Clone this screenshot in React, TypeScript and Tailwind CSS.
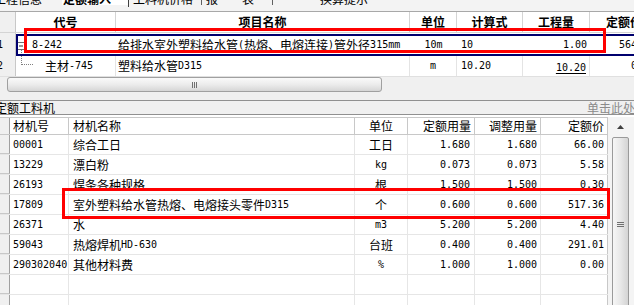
import React from "react";

function Mix({ t }: { t: string }) {
  const parts = t.split(/([\x20-\x7e]+)/).filter((p) => p.length > 0);
  return (
    <>
      {parts.map((p, i) =>
        /^[\x20-\x7e]+$/.test(p) ? (
          <span key={i} className="font-['DejaVu_Sans_Mono',monospace] text-[10px]">
            {p}
          </span>
        ) : (
          <span key={i}>{p}</span>
        )
      )}
    </>
  );
}

const lowerRows: string[][] = [
  ["00001", "综合工日", "工日", "1.680", "1.680", "66.00"],
  ["13229", "漂白粉", "kg", "0.073", "0.073", "5.58"],
  ["26193", "焊条各种规格", "根", "1.500", "1.500", "0.30"],
  ["17809", "室外塑料给水管热熔、电熔接头零件D315", "个", "0.600", "0.600", "517.36"],
  ["26371", "水", "m3", "5.200", "5.200", "4.40"],
  ["59043", "热熔焊机HD-630", "台班", "0.400", "0.400", "291.01"],
  ["290302040", "其他材料费", "%", "1.000", "1.000", "0.00"],
  ["", "", "", "", "", ""],
  ["", "", "", "", "", ""],
];

export default function App() {
  return (
    <div className="relative w-[634px] h-[305px] overflow-hidden bg-white text-black text-[12px] leading-none font-['Noto_Sans_CJK_SC',sans-serif]">
      {/* tab strip (cut off at top) */}
      <div className="h-[12px] flex bg-[#f3f3f3] border-b border-[#a8a8a8] overflow-hidden whitespace-nowrap">
        <div className="w-[62px] shrink-0 overflow-hidden">
          <div className="-mt-[7px] leading-[12px] -ml-[6px]">工程信息</div>
        </div>
        <div className="w-[66px] shrink-0 overflow-hidden bg-white h-[5px]">
          <div className="-mt-[7px] leading-[12px] pl-[1px] font-bold">定额输入</div>
        </div>
        <div className="w-[1px] h-[7px] bg-[#404040] shrink-0" />
        <div className="w-[72px] shrink-0 overflow-hidden">
          <div className="-mt-[7px] leading-[12px] pl-[4px]">工料机价格</div>
        </div>
        <div className="w-[1px] h-[5px] bg-[#606060] shrink-0" />
        <div className="w-[70px] shrink-0 overflow-hidden">
          <div className="-mt-[7px] leading-[12px] pl-[4px]">报<span className="pl-[24px]">表</span></div>
        </div>
        <div className="w-[1px] h-[5px] bg-[#606060] shrink-0" />
        <div className="w-[30px] shrink-0 overflow-hidden">
          <div className="-mt-[6px] ml-[30px] w-[11px] h-[11px] border border-[#505050] bg-white" />
        </div>
        <div className="shrink-0 overflow-hidden">
          <div className="-mt-[7px] leading-[12px] pl-[17px]">换算提示</div>
        </div>
      </div>

      {/* upper table */}
      <div className="w-max">
        <div className="flex h-[21px] border-b border-[#d4d4d4] font-bold">
          <div className="w-[16px] shrink-0 bg-[#f0f0f0] border-r border-[#c8c8c8]" />
          <div className="w-[100px] shrink-0 border-r border-[#d4d4d4] flex items-center justify-center">代号</div>
          <div className="w-[294px] shrink-0 border-r border-[#d4d4d4] flex items-center justify-center">项目名称</div>
          <div className="w-[47px] shrink-0 border-r border-[#d4d4d4] flex items-center justify-center">单位</div>
          <div className="w-[66px] shrink-0 border-r border-[#d4d4d4] flex items-center justify-center">计算式</div>
          <div className="w-[67px] shrink-0 border-r border-[#d4d4d4] flex items-center justify-center">工程量</div>
          <div className="w-[68px] shrink-0 flex items-center justify-center">定额价</div>
        </div>
        {/* row 1 */}
        <div className="flex h-[23px]">
          <div className="w-[16px] shrink-0 bg-[#f0f0f0] border-r border-[#c8c8c8] flex items-center justify-end pr-[12px] text-[10px] font-['DejaVu_Sans_Mono',monospace]">1</div>
          <div className="w-[100px] shrink-0 relative flex items-center pl-[16px]">
            <svg className="absolute left-0 top-0" width="16" height="23" viewBox="0 0 16 23">
              <rect x="1.5" y="9.5" width="7" height="7" fill="white" stroke="#707070" />
              <line x1="3" y1="13" x2="7" y2="13" stroke="#303030" />
              <line x1="5.5" y1="17" x2="5.5" y2="23" stroke="#808080" strokeDasharray="1 1" />
            </svg>
            <Mix t="8-242" />
          </div>
          <div className="w-[294px] shrink-0 flex items-center pl-[2px] whitespace-nowrap">
            <Mix t="给排水室外塑料给水管(热熔、电熔连接) 管外径315mm" />
          </div>
          <div className="w-[47px] shrink-0 flex items-center justify-center"><Mix t="10m" /></div>
          <div className="w-[66px] shrink-0 flex items-center pl-[4px]"><Mix t="10" /></div>
          <div className="w-[67px] shrink-0 flex items-center justify-end pr-[3px]"><Mix t="1.00" /></div>
          <div className="w-[68px] shrink-0 flex items-center justify-end pr-[3px]"><Mix t="564.67" /></div>
        </div>
        {/* row 2 */}
        <div className="flex h-[21px] border-b border-[#e0e0e0]">
          <div className="w-[16px] shrink-0 bg-[#f0f0f0] border-r border-[#c8c8c8] flex items-center justify-end pr-[12px] text-[10px] font-['DejaVu_Sans_Mono',monospace]">2</div>
          <div className="w-[100px] shrink-0 relative flex items-center pl-[29px] border-r border-[#e4e4e4]">
            <svg className="absolute left-0 top-0" width="20" height="21" viewBox="0 0 20 21">
              <line x1="5.5" y1="0" x2="5.5" y2="9" stroke="#808080" strokeDasharray="1 1" />
              <line x1="6" y1="8.5" x2="18" y2="8.5" stroke="#808080" strokeDasharray="1 1" />
            </svg>
            <Mix t="主材-745" />
          </div>
          <div className="w-[294px] shrink-0 flex items-center pl-[2px] border-r border-[#e4e4e4]">
            <Mix t="塑料给水管D315" />
          </div>
          <div className="w-[47px] shrink-0 flex items-center justify-center border-r border-[#e4e4e4]"><Mix t="m" /></div>
          <div className="w-[66px] shrink-0 flex items-center pl-[4px] border-r border-[#e4e4e4]"><Mix t="10.20" /></div>
          <div className="w-[67px] shrink-0 flex items-center justify-end pr-[3px] border-r border-[#e4e4e4]">
            <span className="underline underline-offset-2"><Mix t="10.20" /></span>
          </div>
          <div className="w-[68px] shrink-0 flex items-center justify-end pr-[3px]"><Mix t="0.00" /></div>
        </div>
      </div>

      {/* horizontal scrollbar */}
      <div className="h-[15px] bg-[#f0f0f0] pl-[7px] flex items-stretch">
        <div className="w-[375px] rounded-[3px] border border-[#a0a0a0] bg-gradient-to-b from-[#fafafa] via-[#ececec] to-[#d6d6d6] flex items-center justify-center gap-[1px]">
          <div className="w-[1px] h-[6px] bg-[#707070]" />
          <div className="w-[1px] h-[6px] bg-[#707070]" />
          <div className="w-[1px] h-[6px] bg-[#707070]" />
        </div>
      </div>
      <div className="h-[8px] bg-[#f0f0f0]" />

      {/* panel title */}
      <div className="h-[15px] border-t border-b border-[#909090] bg-[#f0f0f0] flex items-center justify-between whitespace-nowrap overflow-hidden">
        <div className="-ml-[5px]">定额工料机</div>
        <div className="w-[47px] overflow-hidden text-[#8a8a8a]">单击此处显示</div>
      </div>
      <div className="h-[2px] bg-white" />

      {/* lower table */}
      <div className="flex">
        <div className="w-[608px] shrink-0">
          <div className="flex h-[18px] border-t border-b border-[#c8c8c8]">
            <div className="w-[10px] shrink-0 bg-[#f0f0f0] border-r border-[#a0a0a0]" />
            <div className="w-[59px] shrink-0 border-r border-[#c8c8c8] flex items-center pl-[3px]">材机号</div>
            <div className="w-[286px] shrink-0 border-r border-[#c8c8c8] flex items-center pl-[4px]">材机名称</div>
            <div className="w-[53px] shrink-0 border-r border-[#c8c8c8] flex items-center justify-center">单位</div>
            <div className="w-[67px] shrink-0 border-r border-[#c8c8c8] flex items-center justify-end pr-[3px]">定额用量</div>
            <div className="w-[66px] shrink-0 border-r border-[#c8c8c8] flex items-center justify-end pr-[3px]">调整用量</div>
            <div className="w-[67px] shrink-0 border-r border-[#c8c8c8] flex items-center justify-end pr-[3px]">定额价</div>
          </div>
          {lowerRows.map((r, i) => (
            <div key={i} className="flex h-[20px] border-b border-[#e6e6e6]">
              <div className="w-[10px] shrink-0 bg-[#f0f0f0] border-r border-[#a0a0a0] border-b border-b-[#c8c8c8]" />
              <div className="w-[59px] shrink-0 border-r border-[#e6e6e6] flex items-center pl-[3px]"><Mix t={r[0]} /></div>
              <div className="w-[286px] shrink-0 border-r border-[#e6e6e6] flex items-center pl-[4px] whitespace-nowrap"><Mix t={r[1]} /></div>
              <div className="w-[53px] shrink-0 border-r border-[#e6e6e6] flex items-center justify-center"><Mix t={r[2]} /></div>
              <div className="w-[67px] shrink-0 border-r border-[#e6e6e6] flex items-center justify-end pr-[4px]"><Mix t={r[3]} /></div>
              <div className="w-[66px] shrink-0 border-r border-[#e6e6e6] flex items-center justify-end pr-[3px]"><Mix t={r[4]} /></div>
              <div className="w-[67px] shrink-0 border-r border-[#c8c8c8] flex items-center justify-end pr-[3px]"><Mix t={r[5]} /></div>
            </div>
          ))}
        </div>
        {/* vertical scrollbar */}
        <div className="w-[26px] shrink-0 bg-[#f4f4f4] pl-[4px]">
          <div className="w-[17px] flex flex-col">
            <div className="h-[20px] flex items-center justify-center">
              <svg width="7" height="4" viewBox="0 0 7 4">
                <path d="M0 4 L3.5 0 L7 4 Z" fill="#404040" />
              </svg>
            </div>
            <div className="h-[180px] rounded-[2px] border border-[#9a9a9a] bg-gradient-to-r from-[#f6f6f6] via-[#e8e8e8] to-[#d4d4d4] flex flex-col items-center pt-[84px] gap-[1px]">
              <div className="w-[7px] h-[1px] bg-[#707070]" />
              <div className="w-[7px] h-[1px] bg-[#707070]" />
              <div className="w-[7px] h-[1px] bg-[#707070]" />
            </div>
          </div>
        </div>
      </div>

      {/* selection + highlight overlays */}
      <div className="absolute left-[16px] top-[34px] w-[640px] h-[22px] border-2 border-[#00006e] pointer-events-none" />
      <div className="absolute left-[24px] top-[28px] w-[582px] h-[25px] border-[3px] border-[#ff0000] pointer-events-none" />
      <div className="absolute left-[62px] top-[188px] w-[548px] h-[31px] border-[3px] border-[#ff0000] pointer-events-none" />
    </div>
  );
}
